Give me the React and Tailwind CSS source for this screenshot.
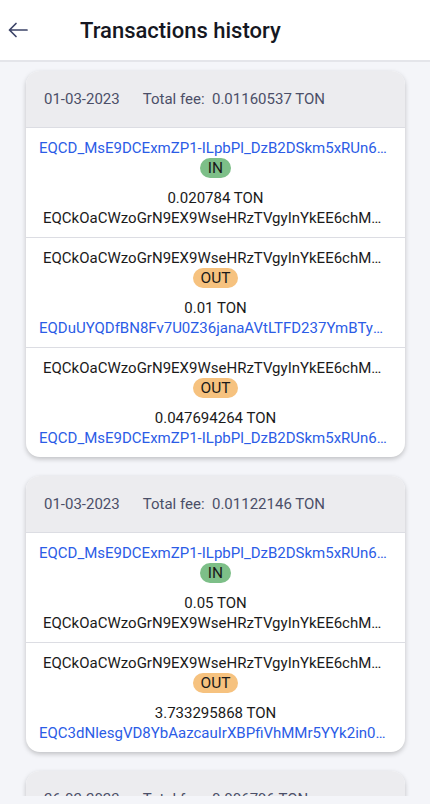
import React from 'react';

const cards = [
  {
    date: '01-03-2023',
    fee: '0.01160537',
    rows: [
      { from: 'EQCD_MsE9DCExmZP1-ILpbPl_DzB2DSkm5xRUn6YbG0TQL3w', fromLink: true, type: 'IN', amount: '0.020784', to: 'EQCkOaCWzoGrN9EX9WseHRzTVgyInYkEE6chMQ2xK7hUv1Pz', toLink: false },
      { from: 'EQCkOaCWzoGrN9EX9WseHRzTVgyInYkEE6chMQ2xK7hUv1Pz', fromLink: false, type: 'OUT', amount: '0.01', to: 'EQDuUYQDfBN8Fv7U0Z36janaAVtLTFD237YmBTyw9cq8Rb2k', toLink: true },
      { from: 'EQCkOaCWzoGrN9EX9WseHRzTVgyInYkEE6chMQ2xK7hUv1Pz', fromLink: false, type: 'OUT', amount: '0.047694264', to: 'EQCD_MsE9DCExmZP1-ILpbPl_DzB2DSkm5xRUn6YbG0TQL3w', toLink: true },
    ],
  },
  {
    date: '01-03-2023',
    fee: '0.01122146',
    rows: [
      { from: 'EQCD_MsE9DCExmZP1-ILpbPl_DzB2DSkm5xRUn6YbG0TQL3w', fromLink: true, type: 'IN', amount: '0.05', to: 'EQCkOaCWzoGrN9EX9WseHRzTVgyInYkEE6chMQ2xK7hUv1Pz', toLink: false },
      { from: 'EQCkOaCWzoGrN9EX9WseHRzTVgyInYkEE6chMQ2xK7hUv1Pz', fromLink: false, type: 'OUT', amount: '3.733295868', to: 'EQC3dNlesgVD8YbAazcauIrXBPfiVhMMr5YYk2in0Mtsz0Bz', toLink: true },
    ],
  },
  {
    date: '26-02-2023',
    fee: '0.006796',
    rows: [
      { from: 'EQCD_MsE9DCExmZP1-ILpbPl_DzB2DSkm5xRUn6YbG0TQL3w', fromLink: true, type: 'IN', amount: '0.1', to: 'EQCkOaCWzoGrN9EX9WseHRzTVgyInYkEE6chMQ2xK7hUv1Pz', toLink: false },
    ],
  },
];

function Address({ value, link }) {
  return (
    <div className={`w-full truncate text-center h-5 leading-5 ${link ? 'px-[13px] text-[#2b5ce6]' : 'px-[17px] text-[#1a1a1a]'}`}>
      {value}
    </div>
  );
}

function Badge({ type }) {
  const isIn = type === 'IN';
  return (
    <div className={`h-5 leading-5 rounded-full px-[8px] text-[15.5px] text-[#1a1a1a] ${isIn ? 'bg-[#7dbf88]' : 'bg-[#f6c27f]'}`}>
      {type}
    </div>
  );
}

function Row({ row }) {
  return (
    <div className="flex flex-col items-center pt-[10px] pb-[9px] border-t border-[#dcdde3]">
      <Address value={row.from} link={row.fromLink} />
      <Badge type={row.type} />
      <div className="h-5 leading-5 mt-[10px] text-[#1a1a1a]">{row.amount} TON</div>
      <Address value={row.to} link={row.toLink} />
    </div>
  );
}

function Card({ card }) {
  return (
    <div className="bg-white rounded-[14px] overflow-hidden shadow-[0_2px_5px_rgba(0,0,0,0.22)]">
      <div className="bg-[#ececef] h-[56px] flex items-center pl-[18px] gap-[23px] text-[#4b4f68]">
        <span>{card.date}</span>
        <span>Total fee:&nbsp; {card.fee} TON</span>
      </div>
      {card.rows.map((row, i) => (
        <Row key={i} row={row} />
      ))}
    </div>
  );
}

export default function App() {
  return (
    <div className="h-[804px] w-[430px] flex flex-col bg-[#f4f5f9] overflow-hidden text-[15px]" style={{ fontFamily: 'Roboto, "Noto Sans", sans-serif' }}>
      <div className="h-[62px] shrink-0 bg-white border-b-2 border-[#e4e5ea] flex items-center">
        <svg width="20" height="16" viewBox="0 0 20 16" className="ml-[8px]" fill="none" stroke="#3d4468" strokeWidth="1.7" strokeLinecap="round" strokeLinejoin="round">
          <path d="M19 8H1.5M8 1.5L1.5 8L8 14.5" />
        </svg>
        <h1 className="ml-[52px] text-[22px] font-medium text-[#151722]">Transactions history</h1>
      </div>
      <div className="flex-1 overflow-hidden">
        <div className="flex flex-col gap-[19px] pt-[9px] pl-[26px] pr-[25px]">
          {cards.map((card, i) => (
            <Card key={i} card={card} />
          ))}
        </div>
      </div>
      <div className="h-[8px] shrink-0 bg-[#f4f5f9]" />
    </div>
  );
}
